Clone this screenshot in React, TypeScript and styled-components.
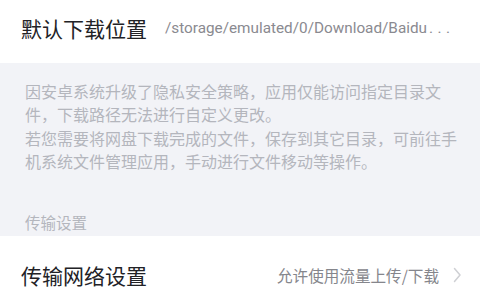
import React from "react";
import styled, { createGlobalStyle } from "styled-components";

const Global = createGlobalStyle`
  html, body { margin: 0; padding: 0; background: #ffffff; }
  body { font-family: "Noto Sans", "Noto Sans CJK SC", sans-serif; }
  * { box-sizing: border-box; }
`;

const Page = styled.div`
  width: 480px;
  height: 300px;
  overflow: hidden;
  display: flex;
  flex-direction: column;
  background: #ffffff;
`;

const Row = styled.div<{ $h: number; $pb?: number }>`
  flex-shrink: 0;
  height: ${(p) => p.$h}px;
  display: flex;
  align-items: center;
  padding: 0 18px ${(p) => p.$pb ?? 0}px 21px;
  gap: 18px;
  background: #ffffff;
`;

const Title = styled.div`
  font-family: "Noto Sans CJK SC", sans-serif;
  font-size: 21px;
  line-height: 28px;
  color: #222226;
  white-space: nowrap;
  flex-shrink: 0;
`;

const Value = styled.div<{ $right?: boolean }>`
  font-family: Roboto, "Noto Sans CJK SC", sans-serif;
  font-size: 15.3px;
  color: #8a8a90;
  white-space: nowrap;
  flex: 1;
  min-width: 0;
  text-align: ${(p) => (p.$right ? "right" : "left")};
`;

const Dots = styled.span`
  letter-spacing: 4.5px;
  margin-left: 2px;
`;

const RightValue = styled(Value)`
  font-family: "Noto Sans CJK SC", sans-serif;
  font-size: 15.6px;
  color: #85868c;
`;

const Chevron = styled.svg`
  width: 10px;
  height: 16px;
  flex-shrink: 0;
  margin-left: -5px;
`;

const Notice = styled.div`
  flex-shrink: 0;
  background: #f2f3f7;
  height: 173px;
  padding: 17px 20px 0 25px;
  display: flex;
  flex-direction: column;
`;

const NoticeLine = styled.div`
  font-family: "Noto Sans CJK SC", sans-serif;
  font-size: 16px;
  line-height: 23.4px;
  color: #b4b6bd;
  white-space: nowrap;
`;

const SectionLabel = styled.div`
  margin-top: auto;
  margin-bottom: 3px;
  font-family: "Noto Sans CJK SC", sans-serif;
  font-size: 15.5px;
  line-height: 22px;
  color: #b4b6bd;
`;

const lines = [
  "因安卓系统升级了隐私安全策略，应用仅能访问指定目录文",
  "件，下载路径无法进行自定义更改。",
  "若您需要将网盘下载完成的文件，保存到其它目录，可前往手",
  "机系统文件管理应用，手动进行文件移动等操作。",
];

export default function App() {
  return (
    <>
      <Global />
      <Page>
        <Row $h={63} $pb={8}>
          <Title>默认下载位置</Title>
          <Value>
            /storage/emulated/0/Download/Baidu<Dots>...</Dots>
          </Value>
        </Row>
        <Notice>
          {lines.map((l) => (
            <NoticeLine key={l}>{l}</NoticeLine>
          ))}
          <SectionLabel>传输设置</SectionLabel>
        </Notice>
        <Row $h={78}>
          <Title>传输网络设置</Title>
          <RightValue $right>允许使用流量上传/下载</RightValue>
          <Chevron viewBox="0 0 10 16">
            <path d="M2.5 1.5 L8 8 L2.5 14.5" fill="none" stroke="#cfd0d4" strokeWidth="1.5" strokeLinecap="round" strokeLinejoin="round" />
          </Chevron>
        </Row>
      </Page>
    </>
  );
}
